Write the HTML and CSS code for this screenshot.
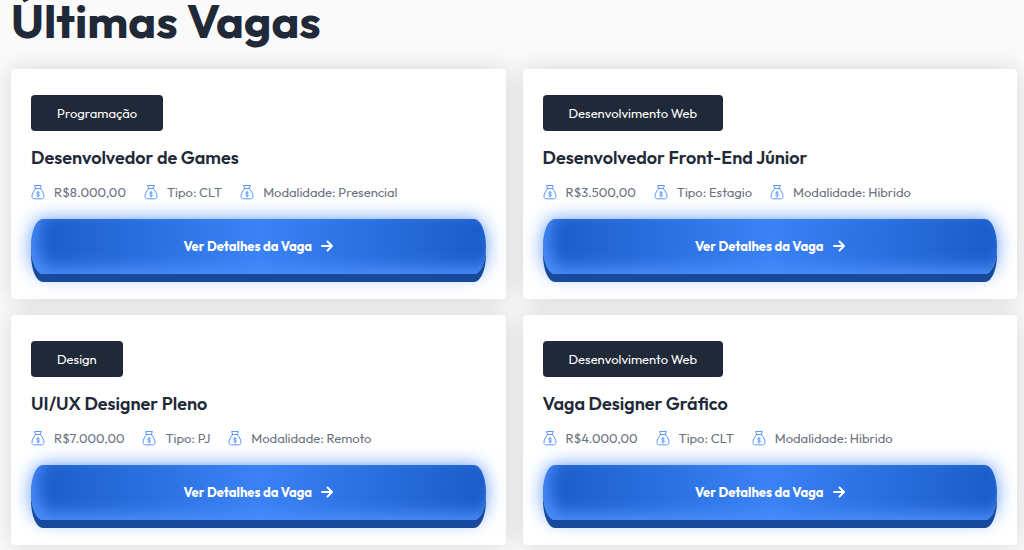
FILE: index.html
```html
<!DOCTYPE html>
<html lang="pt-br">
<head>
    <meta charset="UTF-8">
    <meta name="viewport" content="width=device-width, initial-scale=1">
    <title>Últimas Vagas</title>
    <link rel="stylesheet" href="styles.css">
</head>
<body>
    <!-- Icones reutilizados nos cards -->
    <svg class="sprite" aria-hidden="true">
        <symbol id="money" viewBox="0 0 14 16">
            <g fill="none" stroke="currentColor" stroke-linecap="round" stroke-linejoin="round">
                <path d="M4.6 4.2 3.6 1.5h6.8L9.4 4.2M4.2 4.5h5.6M4.6 4.8C3 6.4 1 9.4 1 12.4 1 14.2 2 14.8 3.6 14.8h6.8c1.6 0 2.6-.6 2.6-2.4 0-3-2-6-3.6-7.6"/>
                <path d="M8.6 8.7C8.2 8 5.6 7.9 5.6 9.2c0 1.3 3 .8 3 2.1 0 1.3-2.6 1.3-3.1.3M7.1 7.4v5.6" stroke-width=".9"/>
            </g>
        </symbol>
        <symbol id="arrow" viewBox="0 0 12 12">
            <path d="M1 6h10M6.5 1.5 11 6l-4.5 4.5" fill="none" stroke="currentColor" stroke-width="1.900" stroke-linecap="round" stroke-linejoin="round"/>
        </symbol>
    </svg>

    <main class="vagas">
        <h1 class="vagas-titulo">Últimas Vagas</h1>

        <div class="vagas-lista">
            <article class="vaga">
                <span class="categoria">Programação</span>
                <h2 class="vaga-titulo">Desenvolvedor de Games</h2>
                <ul class="detalhes">
                    <li><svg class="icone"><use href="#money"/></svg>R$8.000,00</li>
                    <li><svg class="icone"><use href="#money"/></svg>Tipo: CLT</li>
                    <li><svg class="icone"><use href="#money"/></svg>Modalidade: Presencial</li>
                </ul>
                <button class="botao" type="button">Ver Detalhes da Vaga <svg class="seta"><use href="#arrow"/></svg></button>
            </article>

            <article class="vaga">
                <span class="categoria">Desenvolvimento Web</span>
                <h2 class="vaga-titulo">Desenvolvedor Front-End Júnior</h2>
                <ul class="detalhes">
                    <li><svg class="icone"><use href="#money"/></svg>R$3.500,00</li>
                    <li><svg class="icone"><use href="#money"/></svg>Tipo: Estagio</li>
                    <li><svg class="icone"><use href="#money"/></svg>Modalidade: Hibrido</li>
                </ul>
                <button class="botao" type="button">Ver Detalhes da Vaga <svg class="seta"><use href="#arrow"/></svg></button>
            </article>

            <article class="vaga">
                <span class="categoria">Design</span>
                <h2 class="vaga-titulo">UI/UX Designer Pleno</h2>
                <ul class="detalhes">
                    <li><svg class="icone"><use href="#money"/></svg>R$7.000,00</li>
                    <li><svg class="icone"><use href="#money"/></svg>Tipo: PJ</li>
                    <li><svg class="icone"><use href="#money"/></svg>Modalidade: Remoto</li>
                </ul>
                <button class="botao" type="button">Ver Detalhes da Vaga <svg class="seta"><use href="#arrow"/></svg></button>
            </article>

            <article class="vaga">
                <span class="categoria">Desenvolvimento Web</span>
                <h2 class="vaga-titulo">Vaga Designer Gráfico</h2>
                <ul class="detalhes">
                    <li><svg class="icone"><use href="#money"/></svg>R$4.000,00</li>
                    <li><svg class="icone"><use href="#money"/></svg>Tipo: CLT</li>
                    <li><svg class="icone"><use href="#money"/></svg>Modalidade: Hibrido</li>
                </ul>
                <button class="botao" type="button">Ver Detalhes da Vaga <svg class="seta"><use href="#arrow"/></svg></button>
            </article>
        </div>
    </main>
</body>
</html>
```
FILE: styles.css
```css
* {
    box-sizing: border-box;
}
body {
    margin: 0;
    background-color: #fafafa;
    color: #1f2937;
    font-family: Outfit, Lato, sans-serif;
}
.sprite {
    display: none;
}
.vagas {
    padding: 0 7px 5px 11px;
}
.vagas-titulo {
    margin: 0 0 28px;
    font-size: 47px;
    line-height: 41px;
    font-weight: 700;
}
.vagas-lista {
    display: grid;
    grid-template-columns: 1fr 1fr;
    gap: 16px 17px;
}
.vaga {
    padding: 26px 20px 25px;
    background-color: #fff;
    border-radius: 4px;
    box-shadow: 0 0 24px rgba(0, 0, 0, 0.14);
}
.categoria {
    display: block;
    width: fit-content;
    padding: 8px 26px;
    background-color: #1f2937;
    border-radius: 4px;
    color: #fff;
    font-size: 13px;
    line-height: 20px;
}
.vaga-titulo {
    margin: 15px 0 12px;
    font-size: 18px;
    line-height: 24px;
    font-weight: 600;
}
.detalhes {
    display: flex;
    gap: 18px;
    margin: 0 0 17px;
    padding: 0;
    list-style: none;
    color: #6b7280;
    font-size: 13px;
    line-height: 20px;
}
.detalhes li {
    display: flex;
    align-items: center;
    gap: 9px;
}
.icone {
    width: 14px;
    height: 16px;
    color: #5b97ff;
}
.botao {
    display: flex;
    align-items: center;
    justify-content: center;
    gap: 9px;
    width: 100%;
    height: 55px;
    padding: 0 0 2px;
    border: 0;
    border-radius: 12px / 50%;
    background: linear-gradient(90deg, #1a5cc8, #3b82f6 50%, #1a5cc8);
    box-shadow:
        inset 7px -7px 15px #4b8dfa,
        0 8px 0 #184a9c,
        0 0 18px rgba(59, 130, 246, 0.8);
    color: #fff;
    font-family: inherit;
    font-size: 13px;
    font-weight: 700;
    cursor: pointer;
}
.seta {
    width: 12px;
    height: 12px;
}
```
